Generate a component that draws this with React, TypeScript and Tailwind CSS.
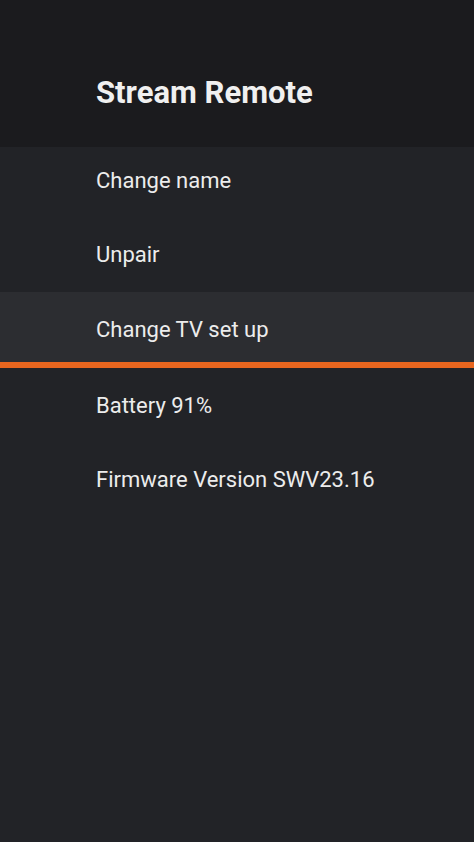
const items = [
  { label: "Change name", h: "h-[70px] pb-[4px]" },
  { label: "Unpair", h: "h-[75px]" },
  { label: "Change TV set up", selected: true },
  { label: "Battery 91%", h: "h-[74px]" },
  { label: "Firmware Version SWV23.16", h: "h-[75px]" },
];

export default function App() {
  return (
    <div
      className="w-[474px] h-[842px] bg-[#222327] text-[#ececec] flex flex-col overflow-hidden"
      style={{ fontFamily: "Roboto, 'Noto Sans', sans-serif" }}
    >
      {/* Header */}
      <div className="h-[147px] bg-[#1b1b1e] pl-[96px] pt-[74px] shrink-0">
        <h1 className="text-[31px] leading-[38px] font-bold text-[#f0f0f0]">Stream Remote</h1>
      </div>

      {/* Menu list */}
      <div className="flex flex-col">
        {items.map((item) =>
          item.selected ? (
            <div
              key={item.label}
              className="h-[76px] bg-[#2c2d31] border-b-[6px] border-[#e8661f] flex items-center pl-[96px] pt-[4px]"
            >
              <span className="text-[22px]">{item.label}</span>
            </div>
          ) : (
            <div key={item.label} className={`${item.h} flex items-center pl-[96px]`}>
              <span className="text-[22px]">{item.label}</span>
            </div>
          )
        )}
      </div>
    </div>
  );
}
